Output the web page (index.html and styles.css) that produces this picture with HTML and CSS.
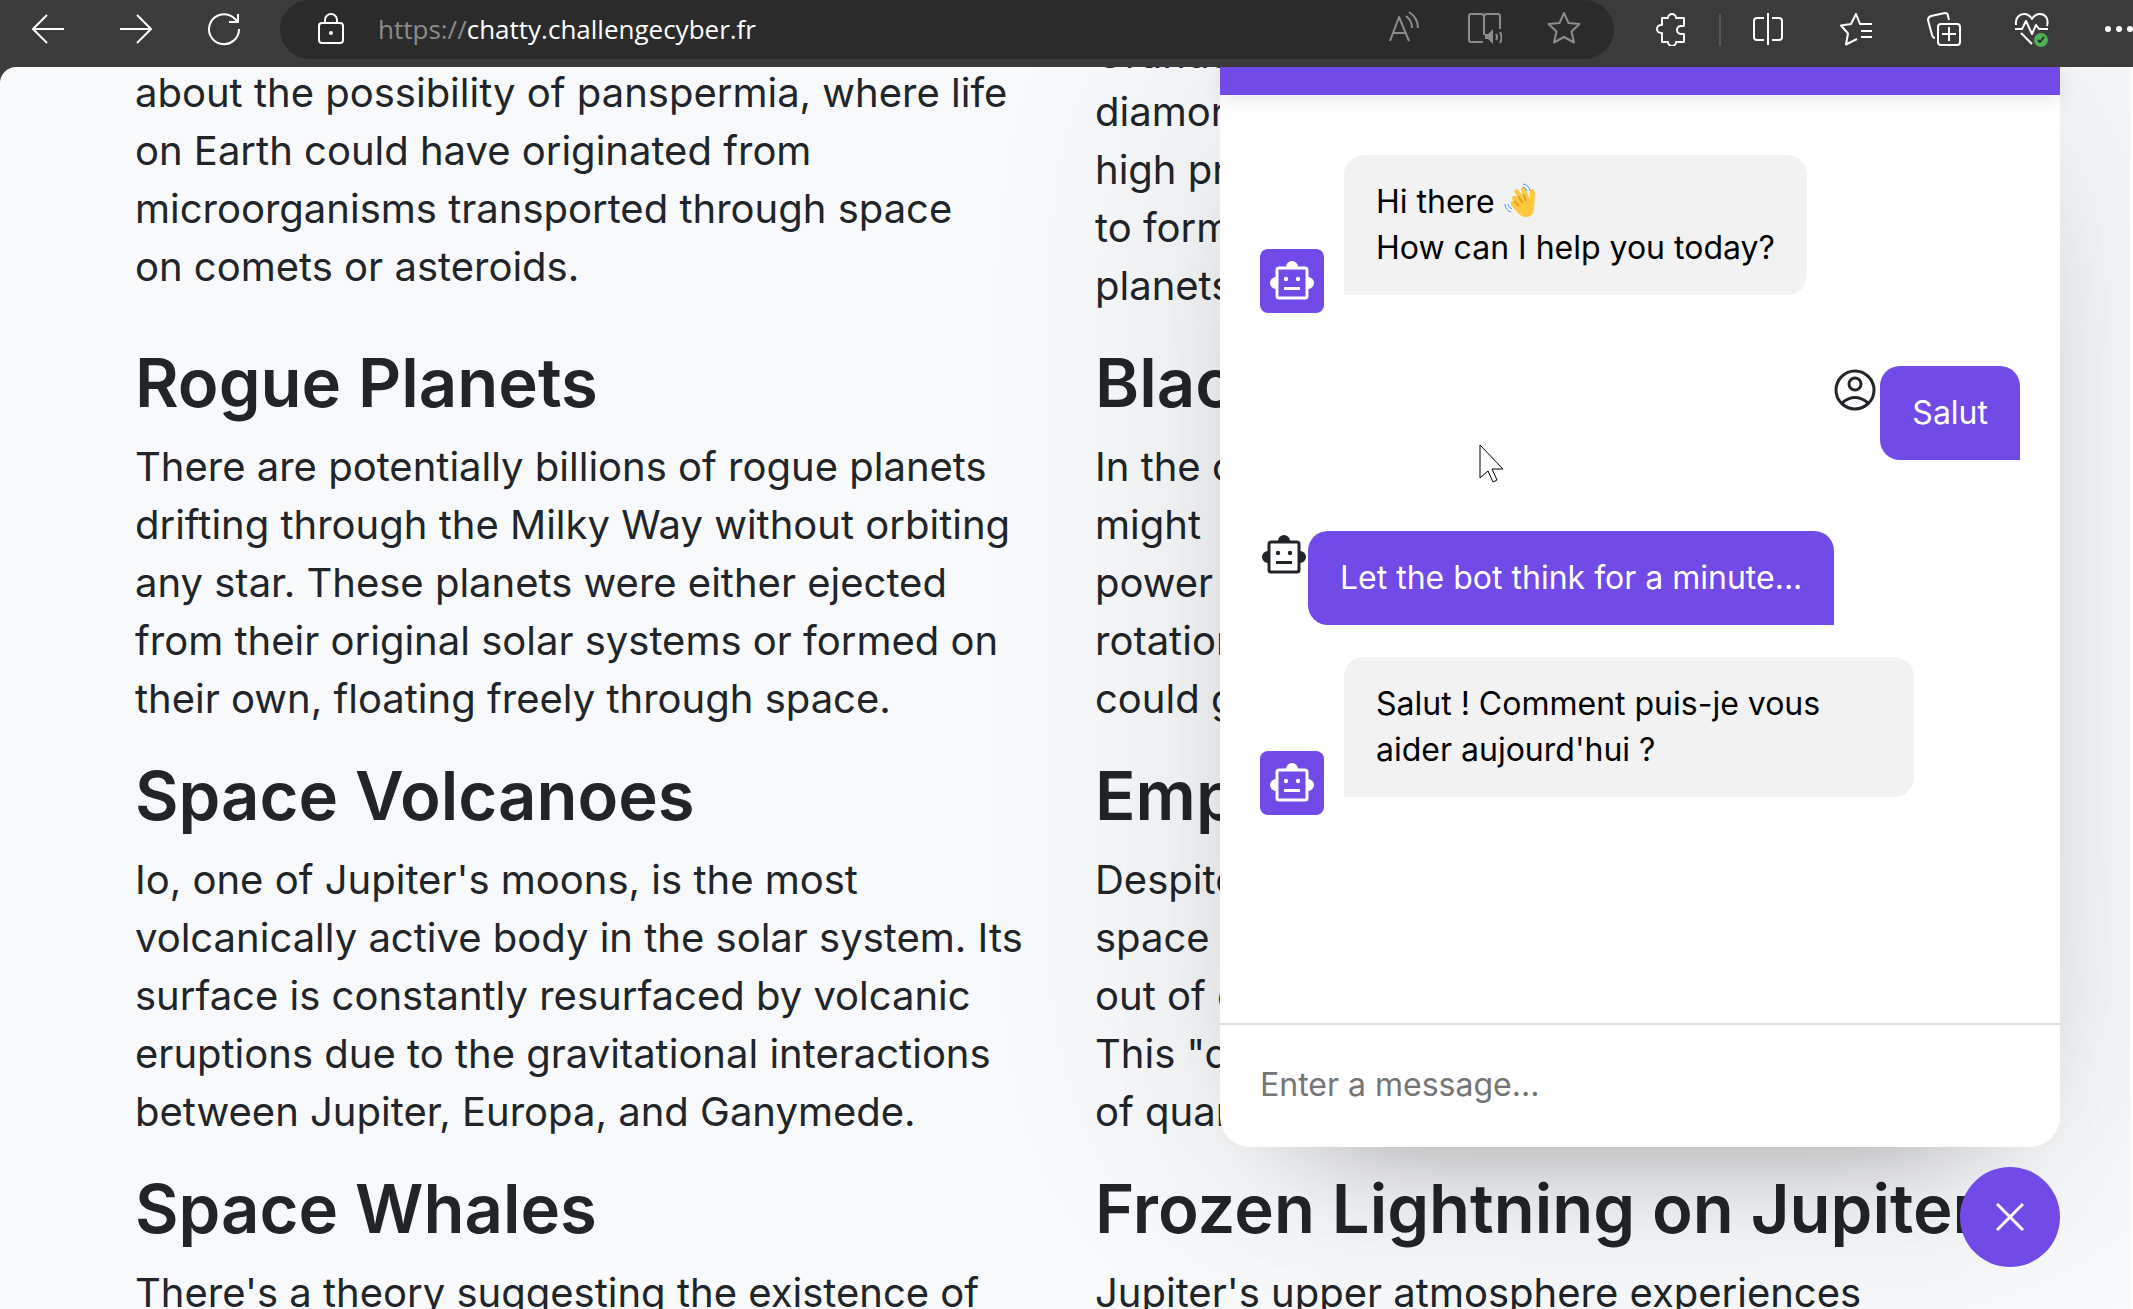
FILE: index.html
```
<!DOCTYPE html>
<html lang="en">
<head>
    <meta charset="UTF-8">
    <meta name="viewport" content="width=device-width, initial-scale=1.0">
    <title>Chatty</title>
    <link rel="stylesheet" href="styles.css">
</head>
<body>
    <!-- shared robot icon -->
    <svg class="defs" aria-hidden="true">
        <symbol id="robot" viewBox="0 0 48 48">
            <path fill="currentColor" d="M24 4a6 6 0 0 0-6 6h12a6 6 0 0 0-6-6zM8 20a6 6 0 0 0 0 12zM40 20v12a6 6 0 0 0 0-12z"/>
            <rect x="9" y="11" width="30" height="30" rx="2" fill="none" stroke="currentColor" stroke-width="3"/>
            <circle cx="18" cy="22" r="2.2" fill="currentColor"/>
            <circle cx="30" cy="22" r="2.2" fill="currentColor"/>
            <rect x="16" y="30" width="16" height="3" fill="currentColor"/>
        </symbol>
    </svg>

    <header class="toolbar">
        <button class="tool" aria-label="Back"><svg width="34" height="34" viewBox="0 0 34 34"><path d="M33 17H2M16 3L2 17l14 14"/></svg></button>
        <button class="tool" aria-label="Forward"><svg width="34" height="34" viewBox="0 0 34 34"><path d="M1 17h31M18 3l14 14-14 14"/></svg></button>
        <button class="tool" aria-label="Refresh"><svg width="34" height="34" viewBox="0 0 34 34"><path d="M32 17A15 15 0 1 1 27 6l4 4M31 2v8h-9"/></svg></button>

        <div class="address">
            <svg class="lock" width="34" height="34" viewBox="0 0 34 34"><rect x="5" y="11" width="24" height="20" rx="3"/><path d="M11 11V8a6 6 0 0 1 12 0v3"/><circle class="solid" cx="17" cy="21" r="2"/></svg>
            <div class="url">https://<span>chatty.challengecyber.fr</span></div>
            <button class="tool dim" aria-label="Read aloud"><svg width="34" height="34" viewBox="0 0 34 34"><path d="M3 30L12 6l10 24M6 22h13M19 5c4 3 6 7 6 12M22 1c6 4 9 9 9 16"/></svg></button>
            <button class="tool dim" aria-label="Immersive reader"><svg width="36" height="34" viewBox="0 0 36 34"><path d="M17 31H5a2 2 0 0 1-2-2V5a2 2 0 0 1 2-2h10q3 0 3 3v18M18 6q0-3 3-3h11a2 2 0 0 1 2 2v13M30 23q2 3 0 6M34 21q3 5 0 11"/><path class="solid" d="M19 23h3l5-5v15l-5-5h-3z"/></svg></button>
            <button class="tool dim" aria-label="Add to favourites"><svg width="34" height="34" viewBox="0 0 34 34"><path d="M17 2l4.500 10 11 1-8 7.500 2.500 11L17 26l-10 5.500 2.500-11-8-7.500 11-1z"/></svg></button>
        </div>

        <button class="tool" aria-label="Extensions"><svg width="34" height="34" viewBox="0 0 34 34"><path d="M7 6h6a4 4 0 0 1 8 0h8v8h-3a4 4 0 0 0 0 8h3v8h-8a4 4 0 0 1-8 0H7v-9H6a4 4 0 0 1 0-8h1z"/></svg></button>
        <span class="divider"></span>
        <button class="tool" aria-label="Split screen"><svg width="34" height="34" viewBox="0 0 34 34"><path d="M17 1v32M13 6H6a3 3 0 0 0-3 3v16a3 3 0 0 0 3 3h7M21 6h7a3 3 0 0 1 3 3v16a3 3 0 0 1-3 3h-7"/></svg></button>
        <button class="tool" aria-label="Favourites"><svg width="34" height="34" viewBox="0 0 34 34"><path d="M33 12H21L17 2l-5 10-10 1.500 7 8-2 11L18 27M22 19h11M22 25h11"/></svg></button>
        <button class="tool" aria-label="Collections"><svg width="34" height="34" viewBox="0 0 34 34"><path d="M8 26q-2 0-3-3L1 8q0-3 3-4l14-3q3 0 3 3l1 4M14 12h16a3 3 0 0 1 3 3v15a3 3 0 0 1-3 3H14a3 3 0 0 1-3-3V15a3 3 0 0 1 3-3zM22 15v14M15 22h14"/></svg></button>
        <button class="tool" aria-label="Browser essentials"><svg width="36" height="36" viewBox="0 0 36 36"><path d="M2 14C1 6 6 3 10 3q5 0 8 5 3-5 8-5c5 0 9 4 7 12M1 18h7l4-8 6 13 4-9 3 4h9M7 22l11 11"/><circle class="ok" cx="27" cy="29" r="7"/><path class="tick" d="M24 29l2 2 4-5"/></svg></button>
        <button class="tool more" aria-label="More"><svg width="28" height="34" viewBox="0 0 28 34"><g class="solid"><circle cx="3" cy="17" r="3"/><circle cx="14" cy="17" r="3"/><circle cx="25" cy="17" r="3"/></g></svg></button>
    </header>

    <main class="page">
        <div class="articles">
            <article class="continued">
                <p>about the possibility of panspermia, where life<br>on Earth could have originated from<br>microorganisms transported through space<br>on comets or asteroids.</p>
            </article>
            <article>
                <p>Uranus,<br>diamonds<br>high pressure<br>to form<br>planets</p>
            </article>
            <article>
                <h2>Rogue Planets</h2>
                <p>There are potentially billions of rogue planets<br>drifting through the Milky Way without orbiting<br>any star. These planets were either ejected<br>from their original solar systems or formed on<br>their own, floating freely through space.</p>
            </article>
            <article>
                <h2>Black</h2>
                <p>In the c<br>might<br>power<br>rotation<br>could g</p>
            </article>
            <article>
                <h2>Space Volcanoes</h2>
                <p>Io, one of Jupiter's moons, is the most<br>volcanically active body in the solar system. Its<br>surface is constantly resurfaced by volcanic<br>eruptions due to the gravitational interactions<br>between Jupiter, Europa, and Ganymede.</p>
            </article>
            <article>
                <h2>Empty</h2>
                <p>Despite<br>space<br>out of e<br>This "qu<br>of quan</p>
            </article>
            <article>
                <h2>Space Whales</h2>
                <p>There's a theory suggesting the existence of</p>
            </article>
            <article>
                <h2>Frozen Lightning on Jupiter</h2>
                <p>Jupiter's upper atmosphere experiences</p>
            </article>
        </div>

        <section class="chatbot">
            <header></header>
            <ul class="chatbox">
                <li class="chat incoming">
                    <span class="avatar"><svg width="48" height="48"><use href="#robot"/></svg></span>
                    <p>Hi there <svg class="wave" width="32" height="36" viewBox="0 0 32 36"><path fill="#ffc83d" d="M9 17q-2-3 0-4 2-1 4 1l5 5-7-9q-1-3 1-4 2 0 3 2l6 9-4-10q0-3 2-3t3 3l4 10V9q0-3 2-3t3 3l-1 17q-1 8-8 8-5 0-9-5l-6-7q-1-3 1-4 2 0 3 1z"/><path class="crease" d="M10 18l5 5M14 13l5 7M19 11l3 7"/><path class="motion" d="M1 21q0 6 6 8M4 21q0 3 4 5M19 1q6 1 7 7M19 4q3 1 4 4"/></svg><br>How can I help you today?</p>
                </li>
                <li class="chat outgoing">
                    <svg class="icon" width="48" height="48" viewBox="0 0 48 48"><g fill="none" stroke="currentColor" stroke-width="3"><circle cx="23" cy="24" r="19"/><circle cx="23" cy="18" r="6"/><path d="M10 37q13-11 26 0"/></g></svg>
                    <p>Salut</p>
                </li>
                <li class="chat thinking">
                    <svg class="icon" width="48" height="48"><use href="#robot"/></svg>
                    <p>Let the bot think for a minute...</p>
                </li>
                <li class="chat incoming">
                    <span class="avatar"><svg width="48" height="48"><use href="#robot"/></svg></span>
                    <p>Salut ! Comment puis-je vous aider aujourd'hui ?</p>
                </li>
            </ul>
            <div class="chat-input">
                <input type="text" placeholder="Enter a message..." aria-label="Message">
            </div>
        </section>

        <button class="toggler" aria-label="Close chat"><svg width="28" height="28" viewBox="0 0 28 28"><path d="M1 1l26 26M27 1L1 27"/></svg></button>

        <svg class="cursor" width="26" height="40" viewBox="0 0 26 40"><path d="M1 1v33l8-7 5 11 4-2-5-11h11z"/></svg>
    </main>
</body>
</html>
```
FILE: styles.css
```
* {
    box-sizing: border-box;
    margin: 0;
    padding: 0;
}

body {
    height: 100vh;
    display: flex;
    flex-direction: column;
    overflow: hidden;
    background: #3b3b3b;
    color: #212529;
    font-family: Inter, "Liberation Sans", sans-serif;
}

button {
    border: none;
    background: none;
    cursor: pointer;
}

.defs {
    position: absolute;
    width: 0;
    height: 0;
}

/* browser toolbar */
.toolbar {
    display: flex;
    flex: none;
    height: 67px;
    padding: 0 0 8px 4px;
}

.tool {
    display: flex;
    align-items: center;
    justify-content: center;
    width: 88px;
    padding-bottom: 2px;
    color: #fff;
}

.tool svg,
.lock {
    fill: none;
    stroke: currentColor;
    stroke-width: 2;
    stroke-linejoin: round;
}

.tool .solid,
.lock .solid {
    fill: currentColor;
    stroke: none;
}

.tool .ok {
    fill: #4caf50;
    stroke: none;
}

.tool .tick {
    stroke: #2b2b2b;
}

.tool.dim {
    width: 80px;
    color: #8c8c8c;
}

.tool.more {
    width: 57px;
    justify-content: flex-end;
}

.divider {
    width: 2px;
    height: 32px;
    margin: 14px 3px;
    background: #555;
}

.address {
    display: flex;
    align-items: center;
    flex: 1;
    margin: 0 14px 0 12px;
    padding: 0 10px 2px 34px;
    border-radius: 30px;
    background: #2b2b2b;
    color: #fff;
}

.url {
    flex: 1;
    margin-left: 30px;
    color: #8c8c8c;
    font-family: "Open Sans", sans-serif;
    font-size: 26px;
}

.url span {
    color: #fff;
}

/* page content */
.page {
    position: relative;
    flex: 1;
    overflow: hidden;
    border-top-left-radius: 16px;
    border-right: 3px solid #fcfcfc;
    background: #f8f9fb;
}

.articles {
    display: grid;
    grid-template-columns: 1fr 1fr;
    gap: 29px 30px;
    margin-top: -42px;
    padding: 0 105px 0 135px;
    white-space: nowrap;
}

.articles h2 {
    margin-bottom: 16px;
    font-size: 67px;
    font-weight: 600;
    line-height: 78px;
}

.articles p {
    font-size: 40px;
    line-height: 58px;
}

.continued {
    padding-top: 39px;
}

/* chat window */
.chatbot {
    position: absolute;
    top: 0;
    right: 70px;
    bottom: 162px;
    display: flex;
    flex-direction: column;
    width: 840px;
    border-radius: 0 0 30px 30px;
    background: #fff;
    box-shadow: 0 0 256px rgba(0, 0, 0, 0.1), 0 64px 128px -96px rgba(0, 0, 0, 0.5);
}

.chatbot header {
    height: 28px;
    background: #724ae8;
    box-shadow: 0 4px 20px rgba(0, 0, 0, 0.1);
}

.chatbox {
    flex: 1;
    padding: 60px 40px;
    list-style: none;
}

.chat {
    display: flex;
    margin-bottom: 71px;
}

.chat p {
    max-width: 570px;
    padding: 24px 32px;
    border-radius: 20px 20px 0 20px;
    background: #724ae8;
    color: #fff;
    font-size: 32px;
    line-height: 46px;
}

.incoming p {
    border-radius: 20px 20px 20px 0;
    background: #f2f2f2;
    color: #000;
}

.avatar {
    display: flex;
    align-items: center;
    justify-content: center;
    align-self: flex-end;
    flex: none;
    width: 64px;
    height: 64px;
    margin: 0 20px -18px 0;
    border-radius: 8px;
    background: #724ae8;
    color: #fff;
}

.outgoing {
    justify-content: flex-end;
}

.thinking {
    margin-bottom: 32px;
}

.wave {
    vertical-align: -6px;
}

.wave .crease {
    fill: none;
    stroke: #e5a020;
    stroke-width: 2;
}

.wave .motion {
    fill: none;
    stroke: #5092ff;
    stroke-width: 1;
}

.chat-input {
    padding: 0 40px;
    border-top: 2px solid #ddd;
}

.chat-input input {
    width: 100%;
    height: 122px;
    padding-bottom: 4px;
    border: none;
    outline: none;
    background: none;
    font-family: inherit;
    font-size: 32px;
}

.chat-input input::placeholder {
    color: #757575;
}

.toggler {
    position: absolute;
    right: 70px;
    bottom: 42px;
    display: flex;
    align-items: center;
    justify-content: center;
    width: 100px;
    height: 100px;
    border-radius: 50%;
    background: #724ae8;
}

.toggler svg {
    stroke: #fff;
    stroke-width: 3;
}

.cursor {
    position: absolute;
    left: 1479px;
    top: 377px;
    fill: #fff;
    stroke: #000;
    stroke-width: 1;
}
```
